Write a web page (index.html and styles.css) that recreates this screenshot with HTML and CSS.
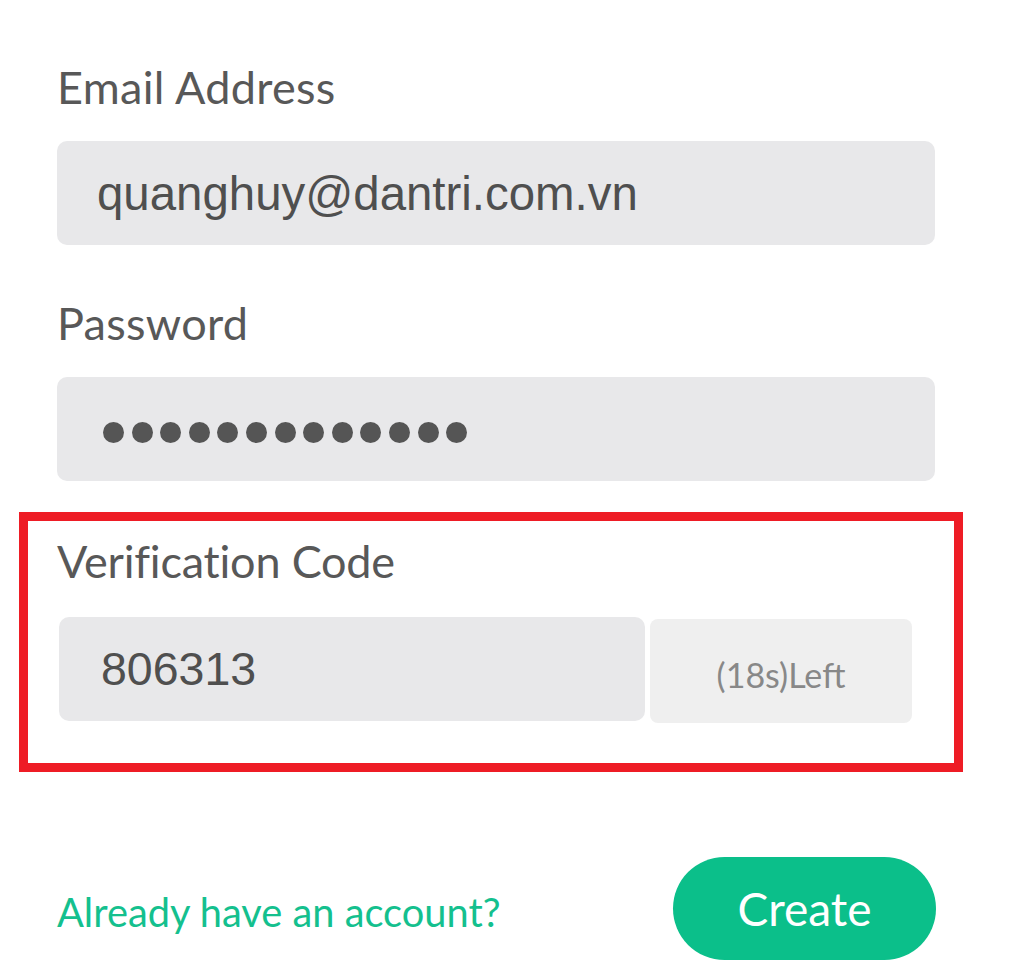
FILE: index.html
```html
<!DOCTYPE html>
<html lang="en">
<head>
<meta charset="utf-8">
<title>Create account</title>
<link rel="stylesheet" href="styles.css">
</head>
<body>
<form class="form">
  <div class="field">
    <div class="label">Email Address</div>
    <div class="input"><span class="value value-email">quanghuy@dantri.com.vn</span></div>
  </div>
  <div class="field">
    <div class="label">Password</div>
    <div class="input input-pass" aria-label="password">
      <span class="dot"></span><span class="dot"></span><span class="dot"></span><span class="dot"></span><span class="dot"></span><span class="dot"></span><span class="dot"></span><span class="dot"></span><span class="dot"></span><span class="dot"></span><span class="dot"></span><span class="dot"></span><span class="dot"></span>
    </div>
  </div>
  <div class="highlight">
    <div class="label label-code">Verification Code</div>
    <div class="code-row">
      <div class="input input-code"><span class="value">806313</span></div>
      <div class="timer">(18s)Left</div>
    </div>
  </div>
  <div class="actions">
    <a class="link" href="#">Already have an account?</a>
    <button type="button" class="btn">Create</button>
  </div>
</form>
</body>
</html>
```

FILE: styles.css
```css
html, body {
  margin: 0;
  padding: 0;
  background: #ffffff;
}

.form {
  width: 878px;
  margin-left: 57px;
  padding-top: 65px;
  font-family: Lato, "Open Sans", sans-serif;
}

.field {
  display: flex;
  flex-direction: column;
  margin-bottom: 56px;
}

.field + .field {
  margin-bottom: 31px;
}

.label {
  font-size: 45px;
  line-height: 45px;
  color: #585858;
  letter-spacing: 0.3px;
}

.label-code {
  letter-spacing: -0.2px;
}

.input {
  margin-top: 31px;
  height: 104px;
  background: #e8e8ea;
  border-radius: 10px;
  display: flex;
  align-items: center;
  box-sizing: border-box;
  padding-left: 40px;
}

.value {
  font-family: "Liberation Sans", Arial, sans-serif;
  font-size: 46.5px;
  color: #4f4f4f;
}

.value-email {
  font-size: 47.4px;
}

.input-pass {
  padding-left: 46px;
  padding-top: 6px;
  gap: 7.6px;
}

.dot {
  width: 21px;
  height: 21px;
  border-radius: 50%;
  background: #555555;
}

.highlight {
  margin: 0 -28px 0 -38px;
  border: 9px solid #ee1c25;
  padding: 18px 42px 40px 29px;
}

.code-row {
  display: flex;
  align-items: flex-start;
  gap: 5px;
  margin-top: 33px;
  margin-left: 2px;
}

.code-row .input {
  margin-top: 0;
}

.input-code {
  width: 586px;
  padding-left: 42px;
}

.timer {
  margin-top: 2px;
  width: 262px;
  height: 104px;
  background: #efefef;
  border-radius: 8px;
  display: flex;
  align-items: center;
  justify-content: center;
  padding-top: 6px;
  box-sizing: border-box;
  font-size: 34px;
  color: #888888;
}

.actions {
  margin-top: 85px;
  display: flex;
  align-items: center;
  justify-content: space-between;
}

.link {
  font-size: 39.8px;
  color: #14c08e;
  text-decoration: none;
  padding-top: 6px;
}

.btn {
  width: 263px;
  height: 103px;
  border: none;
  border-radius: 52px;
  background: #0bbf8a;
  color: #ffffff;
  font-family: Lato, "Open Sans", sans-serif;
  font-size: 46px;
  padding: 0;
  margin-right: -1px;
}
```
